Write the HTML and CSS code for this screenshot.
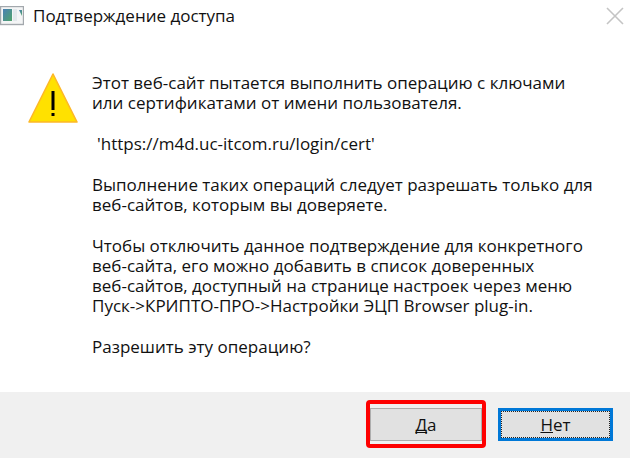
FILE: index.html
```
<!DOCTYPE html>
<html lang="ru">
<head>
  <meta charset="UTF-8">
  <meta name="viewport" content="width=device-width, initial-scale=1.0">
  <title>Подтверждение доступа</title>
  <link rel="stylesheet" href="styles.css">
</head>
<body>

  <div class="dialog">
    <header class="titlebar">
      <svg class="app-icon" width="24" height="20" viewBox="0 0 24 20" aria-hidden="true">
        <defs>
          <linearGradient id="screen" x1="0" y1="0" x2="1" y2="1">
            <stop offset="0" stop-color="#4a7fb5"/>
            <stop offset="1" stop-color="#4fa36a"/>
          </linearGradient>
        </defs>
        <rect x="0.5" y="0.5" width="23" height="18" fill="#f4f5f6" stroke="#a3a8ad" stroke-width="1.4"/>
        <rect x="3" y="3" width="9" height="12" fill="url(#screen)"/>
        <rect x="13" y="3" width="4" height="12" fill="#e3e8ec"/>
        <path d="M19 4H22V10Z" fill="url(#screen)"/>
      </svg>
      <h1 class="title">Подтверждение доступа</h1>
      <button class="btn-close" type="button" aria-label="Закрыть">
        <svg width="18" height="18" viewBox="0 0 18 18" aria-hidden="true">
          <path d="M1 1L17 17M17 1L1 17" fill="none" stroke="#c4c4c4" stroke-width="1.6"/>
        </svg>
      </button>
    </header>

    <main class="content">
      <svg class="warning-icon" width="50" height="51" viewBox="0 0 50 51" aria-hidden="true">
        <path d="M25 1L49 49H1Z" fill="#ffe100" stroke="#fdb827" stroke-width="1.6" stroke-linejoin="round"/>
        <path d="M23.5 18H26.5V37H23.5ZM23.5 40H26.5V43H23.5Z" fill="#000"/>
      </svg>
      <div class="message">
        <p>Этот веб-сайт пытается выполнить операцию с ключами<br>или сертификатами от имени пользователя.</p>
        <p class="site">'https://m4d.uc-itcom.ru/login/cert'</p>
        <p>Выполнение таких операций следует разрешать только для<br>веб-сайтов, которым вы доверяете.</p>
        <p>Чтобы отключить данное подтверждение для конкретного<br>веб-сайта, его можно добавить в список доверенных<br>веб-сайтов, доступный на странице настроек через меню<br>Пуск-&gt;КРИПТО-ПРО-&gt;Настройки ЭЦП Browser plug-in.</p>
        <p>Разрешить эту операцию?</p>
      </div>
    </main>

    <footer class="actions">
      <div class="highlight">
        <button class="btn btn-yes" type="button"><u>Д</u>а</button>
      </div>
      <button class="btn btn-no" type="button"><span class="focus"><u>Н</u>ет</span></button>
    </footer>
  </div>

</body>
</html>
```
FILE: styles.css
```
* {
  box-sizing: border-box;
}

body {
  margin: 0;
  background: #fff;
  color: #111;
  font-family: "Open Sans", "Noto Sans", sans-serif;
  font-size: 17px;
  font-weight: 500;
  line-height: 20px;
}

.dialog {
  display: flex;
  flex-direction: column;
  min-height: 100vh;
}

.titlebar {
  display: flex;
  align-items: center;
  padding: 6px 6px 0 0;
}

.title {
  flex: 1;
  margin: 0 0 0 9px;
  font-size: 17px;
  font-weight: 500;
}

.btn-close {
  display: flex;
  padding: 0;
  border: none;
  background: none;
  cursor: pointer;
}

.content {
  display: flex;
  flex: 1;
  align-items: flex-start;
  padding: 47px 24px 34px 28px;
}

.warning-icon {
  flex: none;
  margin-right: 14px;
}

.message {
  white-space: nowrap;
}

.message p {
  margin: 0 0 21px;
}

.message p:last-child {
  margin-bottom: 0;
}

.message .site {
  padding-left: 5px;
}

.actions {
  display: flex;
  justify-content: flex-end;
  align-items: center;
  gap: 12px;
  padding: 8px 17px 10px;
  background: #f0f0f0;
}

.highlight {
  padding: 4px 0 3px;
  border: 4px solid #fe0000;
  border-radius: 4px;
}

.btn {
  width: 112px;
  height: 33px;
  padding: 0;
  background: #e1e1e1;
  color: #111;
  font: inherit;
  cursor: pointer;
}

.btn u {
  text-decoration-skip-ink: none;
}

.btn-yes {
  display: block;
  border: 1px solid #adadad;
}

.btn-no {
  width: 115px;
  border: 3px solid #0078d7;
}

.focus {
  display: block;
  border: 1px dotted #222;
  line-height: 25px;
}
```
